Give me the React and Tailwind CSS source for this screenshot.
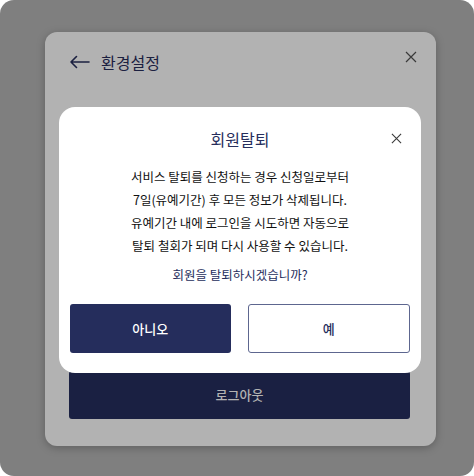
import React from 'react';

const font = { fontFamily: '"Noto Sans CJK KR", "Noto Sans", sans-serif' };

const CloseIcon = ({ className }) => (
  <svg className={className} viewBox="0 0 12 12" fill="none" stroke="currentColor" strokeWidth="1.2">
    <path d="M1 1L11 11M11 1L1 11" />
  </svg>
);

const BackArrow = () => (
  <svg className="w-[21px] h-[14px]" viewBox="0 0 21 14" fill="none" stroke="currentColor" strokeWidth="1.6" strokeLinecap="round" strokeLinejoin="round">
    <path d="M20 7H2M7.5 1.5L2 7l5.5 5.5" />
  </svg>
);

const App = () => {
  return (
    <div className="w-[474px] h-[476px] bg-white" style={font}>
      <div className="relative w-[474px] h-[476px] rounded-[14px] bg-[#7f7f7f] pt-[32px] pl-[45px]">
        {/* Settings panel (dimmed) */}
        <div className="w-[391px] h-[414px] rounded-[12px] bg-[#b2b2b2] shadow-[0_2px_8px_rgba(0,0,0,0.25)] flex flex-col px-[24px] pb-[27px]">
          <div className="flex items-start justify-between pt-[16px]">
            <div className="flex items-center gap-[11px] pt-[3px] text-[#1b2040]">
              <BackArrow />
              <span className="text-[16px] leading-[22px]">환경설정</span>
            </div>
            <CloseIcon className="w-[12px] h-[12px] text-[#3a3a3a] mt-[3px] -mr-[5px]" />
          </div>
          <button className="mt-auto h-[48px] w-[341px] rounded-[3px] bg-[#1a2042] text-[#b3b3b3] text-[13px] font-medium">
            로그아웃
          </button>
        </div>

        {/* Withdrawal modal */}
        <div className="absolute left-[59px] top-[107px] w-[362px] h-[266px] rounded-[16px] bg-white flex flex-col items-center px-[11px]">
          <div className="relative w-full flex justify-center pt-[20px]">
            <h2 className="text-[16px] leading-[24px] text-[#262e5c]">회원탈퇴</h2>
            <CloseIcon className="absolute right-[8px] top-[26px] w-[11px] h-[11px] text-[#3a3a3a]" />
          </div>
          <p className="mt-[14px] text-[12.5px] leading-[23px] text-[#111] text-center">
            서비스 탈퇴를 신청하는 경우 신청일로부터
            <br />
            7일(유예기간) 후 모든 정보가 삭제됩니다.
            <br />
            유예기간 내에 로그인을 시도하면 자동으로
            <br />
            탈퇴 철회가 되며 다시 사용할 수 있습니다.
          </p>
          <p className="mt-[6px] text-[12.5px] leading-[23px] text-[#262e5c]">회원을 탈퇴하시겠습니까?</p>
          <div className="mt-[18px] w-full flex gap-[17px]">
            <button className="flex-1 h-[49px] rounded-[3px] bg-[#252d5c] text-white text-[13px] font-medium">
              아니오
            </button>
            <button className="flex-1 h-[49px] rounded-[3px] border border-[#5d668f] bg-white text-[#262e5c] text-[13px] font-medium">
              예
            </button>
          </div>
        </div>
      </div>
    </div>
  );
};

export default App;
